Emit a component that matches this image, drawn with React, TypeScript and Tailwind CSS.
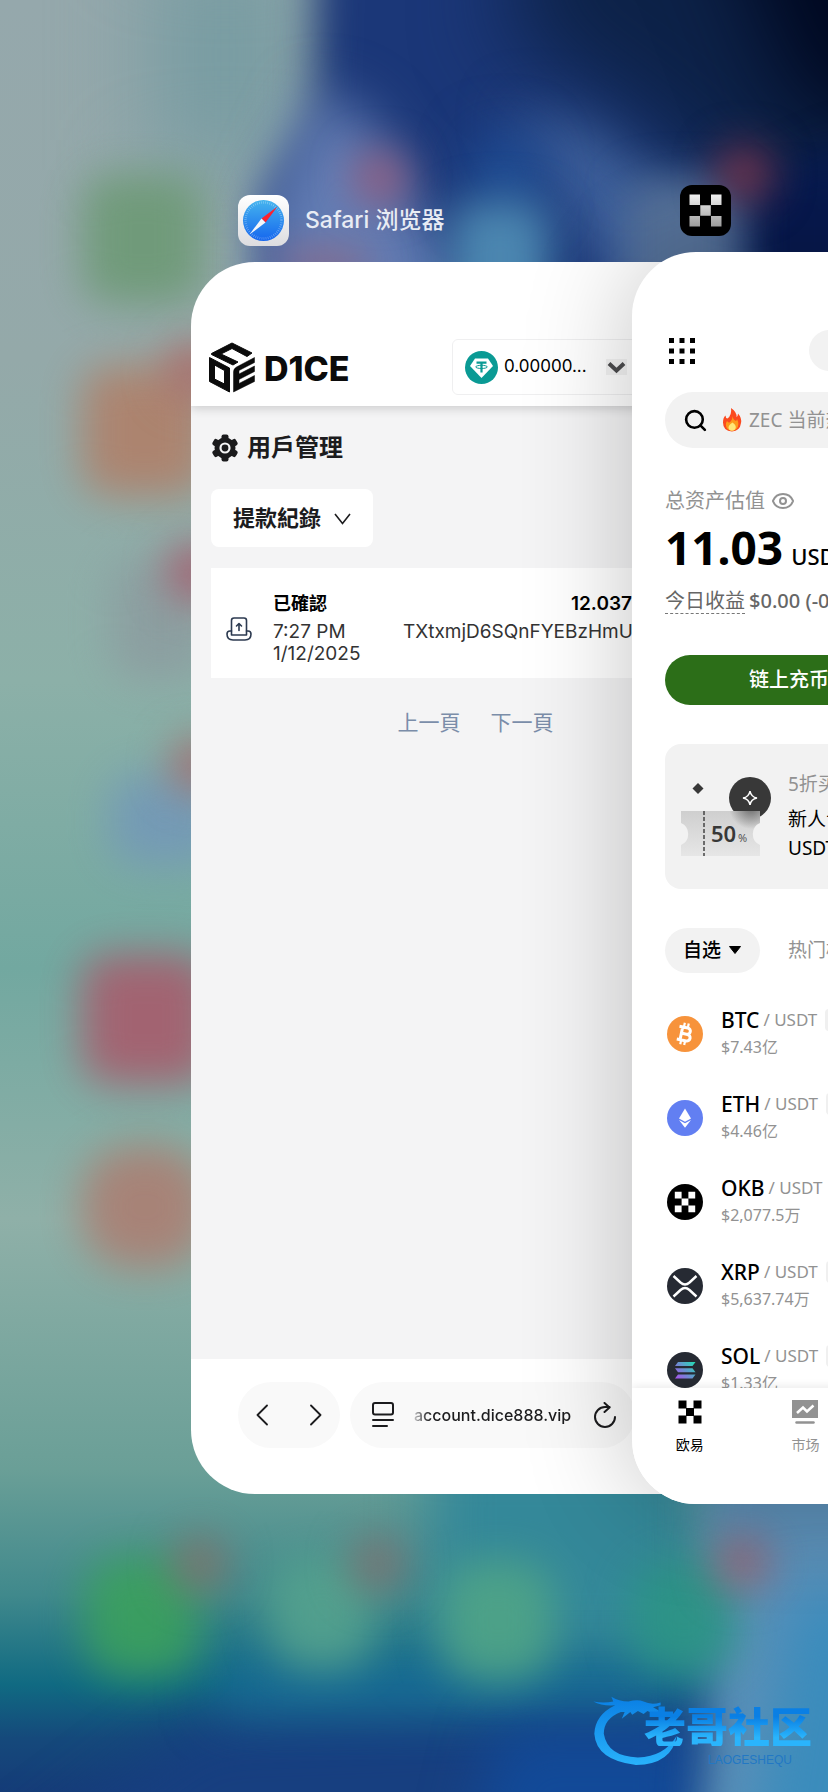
import type { ReactNode } from "react";
import { Eye, Search } from "lucide-react";

interface Coin {
  symbol: string;
  volume: string;
  icon: ReactNode;
}

const coins: Coin[] = [
  { symbol: "BTC", volume: "$7.43亿", icon: <BtcIcon /> },
  { symbol: "ETH", volume: "$4.46亿", icon: <EthIcon /> },
  { symbol: "OKB", volume: "$2,077.5万", icon: <OkbIcon /> },
  { symbol: "XRP", volume: "$5,637.74万", icon: <XrpIcon /> },
  { symbol: "SOL", volume: "$1.33亿", icon: <SolIcon /> },
];

function Wallpaper() {
  return (
    <svg
      className="absolute inset-0 h-full w-full"
      viewBox="0 0 828 1792"
      preserveAspectRatio="none"
      aria-hidden="true"
    >
      <defs>
        <linearGradient id="wall-base" x1="0" y1="0" x2="0" y2="1">
          <stop offset="0" stopColor="#95a8ac" />
          <stop offset="0.2" stopColor="#94a9a9" />
          <stop offset="0.38" stopColor="#8cb0a8" />
          <stop offset="0.54" stopColor="#72a8a0" />
          <stop offset="0.68" stopColor="#8fb0a8" />
          <stop offset="0.82" stopColor="#6a9f97" />
          <stop offset="0.89" stopColor="#40898c" />
          <stop offset="0.94" stopColor="#106a82" />
          <stop offset="0.97" stopColor="#15497b" />
          <stop offset="1" stopColor="#153c78" />
        </linearGradient>
        <filter id="blur-s" x="-100%" y="-100%" width="300%" height="300%" colorInterpolationFilters="sRGB">
          <feGaussianBlur stdDeviation="21" />
        </filter>
        <filter id="blur-m" x="-100%" y="-100%" width="300%" height="300%" colorInterpolationFilters="sRGB">
          <feGaussianBlur stdDeviation="28" />
        </filter>
        <filter id="blur-l" x="-100%" y="-100%" width="300%" height="300%" colorInterpolationFilters="sRGB">
          <feGaussianBlur stdDeviation="45" />
        </filter>
      </defs>
      <rect width="828" height="1792" fill="url(#wall-base)" />

      {/* top */}
      <rect x="150" y="-60" width="150" height="230" fill="#789ca2" filter="url(#blur-l)" />
      <path d="M318 -100H1000V420H262V200L312 120Z" fill="#1b3778" filter="url(#blur-s)" />
      <path d="M318 90L370 120L480 320H262V210Z" fill="#637db4" filter="url(#blur-m)" />
      <path d="M510 110L600 120L700 210V320L620 290Z" fill="#40639f" filter="url(#blur-m)" />
      <path d="M560 -140H1000V250L760 230L640 120L500 20Z" fill="#0d2248" filter="url(#blur-l)" />
      <path d="M700 -140H1000V160L800 110Z" fill="#000820" filter="url(#blur-l)" />
      <path d="M745 190L860 140V340H745Z" fill="#07194f" filter="url(#blur-s)" />
      <ellipse cx="505" cy="175" rx="30" ry="40" fill="#1f549e" filter="url(#blur-m)" />
      <rect x="450" y="200" width="100" height="120" rx="30" fill="#4b86b0" filter="url(#blur-s)" />
      <rect x="628" y="180" width="112" height="130" rx="26" fill="#567299" filter="url(#blur-s)" />
      <circle cx="380" cy="178" r="27" fill="#965f80" filter="url(#blur-s)" />
      <circle cx="744" cy="174" r="28" fill="#78344c" filter="url(#blur-s)" />
      <ellipse cx="325" cy="266" rx="50" ry="16" fill="#8c6885" filter="url(#blur-s)" />

      {/* left column of home screen icons */}
      <g opacity="0.88">
        <rect x="82" y="174" width="122" height="130" rx="28" fill="#6c9974" filter="url(#blur-s)" />
        <rect x="82" y="366" width="126" height="130" rx="28" fill="#b07f68" filter="url(#blur-s)" />
        <circle cx="194" cy="370" r="28" fill="#ad6260" filter="url(#blur-s)" />
        <rect x="110" y="560" width="100" height="120" rx="28" fill="#8c9da0" filter="url(#blur-s)" />
        <circle cx="196" cy="572" r="29" fill="#a85468" filter="url(#blur-s)" />
        <rect x="110" y="775" width="110" height="90" rx="28" fill="#7398b8" filter="url(#blur-s)" />
        <circle cx="198" cy="765" r="27" fill="#a96468" filter="url(#blur-s)" />
        <rect x="82" y="954" width="130" height="130" rx="28" fill="#a85a6b" filter="url(#blur-s)" />
        <rect x="82" y="1146" width="126" height="122" rx="50" fill="#ab7d71" filter="url(#blur-s)" />
      </g>

      {/* dock */}
      <path d="M200 1720L1000 1690V1900H-40Z" fill="#173f80" filter="url(#blur-m)" />
      <rect x="430" y="1440" width="270" height="220" fill="#348899" filter="url(#blur-m)" />
      <rect x="220" y="1660" width="460" height="50" fill="#1b6d9a" filter="url(#blur-m)" />
      <path d="M500 1730H700V1900H460Z" fill="#124a98" filter="url(#blur-m)" />
      <path d="M700 1400H1000V1900H692L708 1740Z" fill="#5c90b8" filter="url(#blur-s)" />
      <path d="M790 1590H1000V1900H740Z" fill="#3b8cbc" filter="url(#blur-m)" />
      <g opacity="0.88">
        <rect x="84" y="1556" width="116" height="122" rx="40" fill="#3ba15c" filter="url(#blur-s)" />
        <rect x="268" y="1556" width="108" height="114" rx="40" fill="#55a38e" filter="url(#blur-s)" />
        <rect x="442" y="1560" width="112" height="122" rx="40" fill="#50a586" filter="url(#blur-s)" />
        <rect x="630" y="1560" width="108" height="114" rx="40" fill="#2c9585" filter="url(#blur-s)" />
        <circle cx="200" cy="1564" r="28" fill="#84706a" filter="url(#blur-s)" />
        <circle cx="378" cy="1564" r="28" fill="#827070" filter="url(#blur-s)" />
        <circle cx="742" cy="1562" r="28" fill="#9c6472" filter="url(#blur-s)" />
      </g>
    </svg>
  );
}

function SafariAppIcon() {
  return (
    <svg className="size-[51px]" viewBox="0 0 51 51" aria-hidden="true">
      <defs>
        <linearGradient id="safari-plate" x1="0" y1="0" x2="0" y2="1">
          <stop offset="0" stopColor="#ffffff" />
          <stop offset="1" stopColor="#dcdcdf" />
        </linearGradient>
        <linearGradient id="safari-face" x1="0" y1="0" x2="0" y2="1">
          <stop offset="0" stopColor="#45b4ee" />
          <stop offset="1" stopColor="#1566ee" />
        </linearGradient>
      </defs>
      <rect width="51" height="51" rx="12" fill="url(#safari-plate)" />
      <circle cx="25.5" cy="25.5" r="20.5" fill="url(#safari-face)" />
      <circle
        cx="25.5"
        cy="25.5"
        r="18"
        fill="none"
        stroke="#fff"
        strokeOpacity="0.4"
        strokeWidth="2.4"
        strokeDasharray="0.6 1.5"
      />
      <path d="M39.5 11.5L23.5 23.5L27.5 27.5Z" fill="#fb2230" />
      <path d="M11.5 39.5L23.5 23.5L27.5 27.5Z" fill="#f4f6fa" />
    </svg>
  );
}

function OkxAppIcon() {
  return (
    <svg className="size-[51px]" viewBox="0 0 51 51" aria-hidden="true">
      <defs>
        <linearGradient id="okx-metal" gradientUnits="userSpaceOnUse" x1="0" y1="9" x2="0" y2="42">
          <stop offset="0" stopColor="#f2f2f2" />
          <stop offset="1" stopColor="#9c9c9c" />
        </linearGradient>
      </defs>
      <rect width="51" height="51" rx="12" fill="#000" />
      <path
        d="M9.5 9.5h10.5v10.5h-10.5zM31 9.5h10.5v10.5h-10.5zM20.3 20.3h10.5v10.5h-10.5zM9.5 31h10.5v10.5h-10.5zM31 31h10.5v10.5h-10.5z"
        fill="url(#okx-metal)"
      />
    </svg>
  );
}

function DiceLogo() {
  return (
    <svg className="h-[51px] w-12" viewBox="0 0 48 51" fill="#0b0b0b" aria-hidden="true">
      {/* top face */}
      <path
        d="M24 1L44 11L39 14.500L24 6.500L13 12L30 20L25 23L3.500 12.500V11.500Z"
        stroke="#0b0b0b"
        strokeLinejoin="round"
      />
      {/* left face */}
      <path
        d="M1.500 15.500L21.500 26V50L1.500 39.500ZM6.500 23V37L16.500 42V28.500Z"
        fillRule="evenodd"
        stroke="#0b0b0b"
        strokeLinejoin="round"
      />
      {/* right face */}
      <path
        d="M46.500 15.500V20.500L31 28.500V32L46.500 24V29.500L31 37.500V41.500L46.500 33.500V39.500L25.500 50V30Q25.500 26.500 28.500 25Z"
        stroke="#0b0b0b"
        strokeWidth="0.500"
        strokeLinejoin="round"
      />
    </svg>
  );
}

function TetherIcon() {
  return (
    <svg className="size-[33px]" viewBox="0 0 33 33" aria-hidden="true">
      <circle cx="16.5" cy="16.5" r="16.5" fill="#0a9a94" />
      <path d="M10 7.5H23L28 15L16.5 27L5 15Z" fill="#fff" />
      <path d="M11.5 10.5h10v2.200h-3.900v8.800h-2.200v-8.800h-3.900z" fill="#0a9a94" />
      <ellipse cx="16.5" cy="15.9" rx="5.8" ry="1.6" fill="none" stroke="#0a9a94" />
    </svg>
  );
}

function GearIcon() {
  return (
    <svg className="size-7" viewBox="0 0 28 28" aria-hidden="true">
      <g fill="#1a1a1c">
        <circle cx="14" cy="14" r="10.5" />
        <rect x="10.5" y="0.5" width="7" height="27" rx="2" />
        <rect x="10.5" y="0.5" width="7" height="27" rx="2" transform="rotate(60 14 14)" />
        <rect x="10.5" y="0.5" width="7" height="27" rx="2" transform="rotate(120 14 14)" />
      </g>
      <circle cx="14" cy="14" r="4.5" fill="none" stroke="#f4f4f5" strokeWidth="2.2" />
    </svg>
  );
}

function WithdrawIcon() {
  return (
    <svg
      className="h-6 w-[26px]"
      viewBox="0 0 26 24"
      fill="none"
      stroke="#2c3a50"
      strokeWidth="1.6"
      strokeLinecap="round"
      strokeLinejoin="round"
      aria-hidden="true"
    >
      <path d="M5.500 18V3.500Q5.500 1 8 1H18Q20.500 1 20.500 3.500V18Z" />
      <path d="M5.500 14H4Q1 14 1 17Q1 23 7 23H19Q25 23 25 17Q25 14 22 14H20.500" />
      <path d="M13 13.500V7M10.500 9L13 6.500L15.500 9" />
    </svg>
  );
}

function ReaderIcon() {
  return (
    <svg
      className="h-[26px] w-[22px]"
      viewBox="0 0 22 26"
      fill="none"
      stroke="#1c1c1e"
      strokeWidth="2"
      strokeLinecap="round"
      aria-hidden="true"
    >
      <rect x="1" y="1" width="20" height="11.500" rx="2" />
      <path d="M1 18H21M1 24H15" />
    </svg>
  );
}

function ReloadIcon() {
  return (
    <svg
      className="h-[26px] w-[22px]"
      viewBox="0 0 22 26"
      fill="none"
      stroke="#1c1c1e"
      strokeWidth="2"
      strokeLinecap="round"
      strokeLinejoin="round"
      aria-hidden="true"
    >
      <path d="M21 15A10 10 0 1 1 11 5H15.500" />
      <path d="M10.500 1L15.500 5.500L10.500 10" />
    </svg>
  );
}

function BtcIcon() {
  return (
    <svg className="size-9" viewBox="0 0 36 36" aria-hidden="true">
      <circle cx="18" cy="18" r="18" fill="#f7933b" />
      <g transform="rotate(12 18 18)" fill="none" stroke="#fff" strokeLinejoin="round">
        <path
          d="M11 11.500H19.500a3.100 3.100 0 0 1 0 6.400H14M14 17.900H20.500a3.300 3.300 0 0 1 0 6.700H11M14.300 11.500V24.500"
          strokeWidth="3"
        />
        <path d="M15.500 7V11M19.500 7V11M15.500 25V29M19.500 25V29" strokeWidth="2.200" />
      </g>
    </svg>
  );
}

function EthIcon() {
  return (
    <svg className="size-9" viewBox="0 0 36 36" aria-hidden="true">
      <circle cx="18" cy="18" r="18" fill="#627ff2" />
      <path d="M18 8.500L24 18.500L18 21.700L12 18.500Z" fill="#fff" />
      <path d="M12 20L18 23.200L24 20L18 27.800Z" fill="#fff" />
    </svg>
  );
}

function OkbIcon() {
  return (
    <svg className="size-9" viewBox="0 0 36 36" aria-hidden="true">
      <circle cx="18" cy="18" r="18" fill="#000" />
      <path
        d="M7.800 7.800h6.800v6.800h-6.800zM21.400 7.800h6.800v6.800h-6.800zM14.600 14.600h6.800v6.800h-6.800zM7.800 21.400h6.800v6.800h-6.800zM21.400 21.400h6.800v6.800h-6.800z"
        fill="#fff"
      />
    </svg>
  );
}

function XrpIcon() {
  return (
    <svg className="size-9" viewBox="0 0 36 36" aria-hidden="true">
      <circle cx="18" cy="18" r="18" fill="#262a33" />
      <path
        d="M6.500 8L13.500 14.500Q18 18.300 22.500 14.500L29.500 8M6.500 28.500L13.500 22Q18 18.200 22.500 22L29.500 28.500"
        fill="none"
        stroke="#fff"
        strokeWidth="2.400"
      />
    </svg>
  );
}

function SolIcon() {
  return (
    <svg className="size-9" viewBox="0 0 36 36" aria-hidden="true">
      <defs>
        <linearGradient id="sol" gradientUnits="userSpaceOnUse" x1="8" y1="28" x2="28" y2="10">
          <stop offset="0" stopColor="#b04af0" />
          <stop offset="0.500" stopColor="#6a8fd0" />
          <stop offset="1" stopColor="#22e0b4" />
        </linearGradient>
      </defs>
      <circle cx="18" cy="18" r="18" fill="#262a33" />
      <path
        d="M11 10h17.500l-3 4h-17.500zM8 16.300h17.500l3 4h-17.500zM11 22.600h17.500l-3 4h-17.500z"
        fill="url(#sol)"
      />
    </svg>
  );
}

function Ticket() {
  return (
    <svg className="h-[79px] w-[91px]" viewBox="0 0 91 79" role="img" aria-label="50%">
      <defs>
        <linearGradient id="ticket" x1="0" y1="0" x2="0" y2="1">
          <stop offset="0" stopColor="#cfcfcf" />
          <stop offset="1" stopColor="#e6e6e6" />
        </linearGradient>
        <radialGradient id="ticket-shade" gradientUnits="userSpaceOnUse" cx="70" cy="30" r="22">
          <stop offset="0" stopColor="#6a6a6a" />
          <stop offset="1" stopColor="#6a6a6a" stopOpacity="0" />
        </radialGradient>
      </defs>
      <circle cx="69" cy="21" r="21" fill="#383838" />
      <path
        d="M69 14Q70 20 76 21Q70 22 69 28Q68 22 62 21Q68 20 69 14Z"
        fill="none"
        stroke="#fff"
        strokeWidth="1.500"
      />
      <path d="M17 6L22.500 11.500L17 17L11.500 11.500Z" fill="#383838" />
      <path
        d="M0 34H79V46A12 12 0 0 0 79 68V79H0V68A12 12 0 0 0 0 46Z"
        fill="url(#ticket)"
      />
      <path
        d="M0 34H79V46A12 12 0 0 0 79 68V79H0V68A12 12 0 0 0 0 46Z"
        fill="url(#ticket-shade)"
      />
      <path d="M23 34V79" stroke="#444" strokeWidth="1.500" strokeDasharray="4 2" />
      <text x="30" y="65" fontSize="22" fontWeight="600" fill="#383838" fontFamily="Noto Sans">
        50
      </text>
      <text x="57" y="65" fontSize="11" fill="#555" fontFamily="Noto Sans">
        %
      </text>
    </svg>
  );
}

function SafariCard() {
  return (
    <section className="w-[569px] shrink-0 pt-[195px] font-['Inter','Noto_Sans_CJK_TC',sans-serif]">
      <header className="flex items-center gap-4 pb-4 pl-[47px]">
        <SafariAppIcon />
        <h1 className="font-['Inter','Noto_Sans_CJK_SC',sans-serif] text-[23px] font-medium text-[#e8ecf4]">
          Safari 浏览器
        </h1>
      </header>

      <div className="overflow-hidden rounded-[64px] bg-white">
        <div className="relative flex items-center justify-between pt-[77px] pb-[11px] pl-[17px] shadow-[0_2px_10px_rgba(0,0,0,0.18)]">
          <div className="flex items-center gap-2">
            <DiceLogo />
            <span className="pt-1 text-[34px] leading-none font-extrabold text-[#0b0b0b]">D1CE</span>
          </div>
          <div className="relative flex h-14 w-[308px] items-center gap-1.5 rounded-md border border-[#efeff0] pl-3">
            <TetherIcon />
            <select
              aria-label="Balance"
              className="w-[140px] appearance-none bg-transparent text-[17px] text-black"
            >
              <option>0.00000...</option>
            </select>
            <svg
              className="pointer-events-none absolute left-[153px] h-4 w-[21px] bg-[#f3f3f3]"
              viewBox="0 0 21 16"
              fill="none"
              aria-hidden="true"
            >
              <path d="M3 4.500L10.500 11.500L18 4.500" stroke="#4c4c4e" strokeWidth="4" />
            </svg>
          </div>
        </div>

        <main className="h-[953px] bg-[#f4f4f5] pt-[27px] pl-5">
          <h2 className="flex items-center gap-2 text-2xl leading-[30px] font-bold text-[#1c1c1e]">
            <GearIcon />
            用戶管理
          </h2>

          <div className="relative mt-[26px] h-[58px] w-[162px]">
            <select
              aria-label="紀錄類型"
              className="h-full w-full appearance-none rounded-lg bg-white pl-[22px] text-[22px] font-bold text-[#1c1c1e]"
            >
              <option>提款紀錄</option>
            </select>
            <svg
              className="pointer-events-none absolute top-6 right-[22px] h-3 w-[17px]"
              viewBox="0 0 17 12"
              fill="none"
              aria-hidden="true"
            >
              <path d="M1 1L8.500 10.500L16 1" stroke="#1c1c1e" strokeWidth="1.600" />
            </svg>
          </div>

          <article className="mt-[21px] flex h-[110px] items-center bg-white pt-3 pl-[15px] text-[19px] text-[#333]">
            <WithdrawIcon />
            <div className="ml-[21px] w-[130px] leading-[22px]">
              <p className="mb-1.5 text-lg leading-[22px] font-bold text-black">已確認</p>
              <p>7:27 PM</p>
              <p>1/12/2025</p>
            </div>
            <div className="h-[72px] leading-[22px]">
              <p className="mb-1.5 pl-[168px] font-semibold text-black">12.037</p>
              <p>TXtxmjD6SQnFYEBzHmU</p>
            </div>
          </article>

          <nav className="-ml-5 flex justify-center gap-[30px] pt-[29px] text-[21px] text-[#7b8da9]">
            <button type="button">上一頁</button>
            <button type="button">下一頁</button>
          </nav>
        </main>

        <footer className="flex h-[135px] items-start gap-2.5 pt-[23px] pl-[47px] text-[#1c1c1e]">
          <div className="flex h-[66px] w-[102px] items-center justify-between rounded-full bg-[#f9f9f9] px-[18px]">
            <button type="button" aria-label="返回">
              <svg className="h-[22px] w-3" viewBox="0 0 12 22" fill="none" aria-hidden="true">
                <path
                  d="M11 1.500L1.500 11L11 20.500"
                  stroke="currentColor"
                  strokeWidth="1.800"
                  strokeLinecap="round"
                  strokeLinejoin="round"
                />
              </svg>
            </button>
            <button type="button" aria-label="前進">
              <svg className="h-[22px] w-3" viewBox="0 0 12 22" fill="none" aria-hidden="true">
                <path
                  d="M1 1.500L10.500 11L1 20.500"
                  stroke="currentColor"
                  strokeWidth="1.800"
                  strokeLinecap="round"
                  strokeLinejoin="round"
                />
              </svg>
            </button>
          </div>
          <div className="flex h-[66px] w-[285px] items-center rounded-full bg-[#f9f9f9] pl-[22px]">
            <ReaderIcon />
            <input
              aria-label="網址"
              readOnly
              value="account.dice888.vip"
              className="ml-5 w-[164px] bg-transparent bg-linear-to-r from-[#c4c4c6] from-0% to-[#1c1c1e] to-10% bg-clip-text text-base font-medium text-transparent"
            />
            <button type="button" aria-label="重新載入" className="ml-4">
              <ReloadIcon />
            </button>
          </div>
        </footer>
      </div>
    </section>
  );
}

function CoinRow({ symbol, volume, icon }: Coin) {
  return (
    <li className="flex h-[84px] items-center gap-[18px]">
      {icon}
      <div>
        <p className="flex items-center gap-1 leading-[26px]">
          <span className="text-[21px] font-medium text-black">{symbol}</span>
          <span className="text-[17px] text-[#929292]">/ USDT</span>
          <span className="ml-1 h-[22px] w-9 rounded bg-[#f0f0f0]" />
        </p>
        <p className="text-base leading-7 text-[#929292]">{volume}</p>
      </div>
    </li>
  );
}

function OkxCard() {
  return (
    <section className="relative -ml-[128px] w-[578px] shrink-0 pt-[185px] font-['Noto_Sans','Noto_Sans_CJK_SC',sans-serif]">
      <header className="pb-4 pl-12">
        <OkxAppIcon />
      </header>

      <div className="flex h-[1252px] flex-col overflow-hidden rounded-[64px] bg-white shadow-[0_0_110px_rgba(0,0,0,0.24)]">
        <div className="min-h-0 flex-1 overflow-hidden px-[33px] pt-[78px]">
          <div className="flex items-center justify-between">
            <button type="button" aria-label="菜单" className="ml-1">
              <svg className="size-[26px]" viewBox="0 0 26 26" aria-hidden="true">
                <path
                  d="M0 0h5v5H0zM10.500 0h5v5h-5zM21 0h5v5h-5zM0 10.500h5v5H0zM10.500 10.500h5v5h-5zM21 10.500h5v5h-5zM0 21h5v5H0zM10.500 21h5v5h-5zM21 21h5v5h-5z"
                  fill="#000"
                />
              </svg>
            </button>
            <div className="mr-[167px] h-[41px] w-[201px] rounded-full bg-[#f2f2f2]" />
          </div>

          <label className="mt-[21px] flex h-14 items-center rounded-full bg-[#f2f2f2] pl-[18px]">
            <Search className="size-[25px] text-black" strokeWidth={2.500} />
            <svg className="ml-[14px] h-6 w-5" viewBox="0 0 20 24" aria-hidden="true">
              <path
                d="M9 0Q15 4 14.500 9Q16 8 16 5.500Q20 10 19 15Q18 23 10 23.500Q1 23 1 14.500Q1 9.500 3.500 7.500Q3.500 10 5.500 10.500Q10 7 9 0Z"
                fill="#fb4a1f"
              />
              <path
                d="M10.500 8Q11 12 14 13Q15 12 15 11Q18 17 14.500 21Q10 24.500 5.500 21Q2.500 17 5 13Q6 14.500 7.500 14.500Q10.500 12 10.500 8Z"
                fill="#fd9a1c"
              />
              <path d="M10.500 14.500Q15.500 18 13 21.500Q10 24 7 21.500Q5 18 10.500 14.500Z" fill="#ffe879" />
            </svg>
            <input
              aria-label="搜索"
              placeholder="ZEC 当前热度飙升"
              className="ml-[7px] min-w-0 flex-1 bg-transparent text-[19px] placeholder:text-[#929292]"
            />
          </label>

          <div className="mt-[39px] flex items-center gap-1.5 text-[#929292]">
            <h2 className="text-[20px] leading-[28px]">总资产估值</h2>
            <Eye className="size-6" strokeWidth={2} />
          </div>
          <p className="flex h-[58px] items-baseline gap-2 leading-[64px] text-black">
            <span className="text-[46px] font-bold">11.03</span>
            <span className="text-[22px] font-medium">USDT</span>
          </p>
          <p className="mt-4 flex items-baseline gap-1 text-[20px] leading-6 text-[#666]">
            <span className="border-b border-dashed border-[#777]">今日收益</span>
            <span className="font-medium whitespace-nowrap">$0.00 (-0.02%)</span>
          </p>

          <div className="mt-[41px] grid grid-cols-2 gap-4">
            <button
              type="button"
              className="h-[50px] rounded-full bg-[#2c6e18] text-[20px] font-medium text-white"
            >
              链上充币
            </button>
          </div>

          <article className="mt-[39px] flex h-[145px] items-center gap-4 rounded-2xl bg-[#f2f2f2] pl-4">
            <Ticket />
            <div className="text-[19px] leading-[29px] whitespace-nowrap">
              <p className="mb-1.5 text-[#929292]">5折买币</p>
              <p className="text-black">新人专享</p>
              <p className="text-black">USDT</p>
            </div>
          </article>

          <div className="mt-[39px] flex items-center gap-7 text-[19px] text-[#929292]">
            <div className="relative h-[45px] w-[95px]">
              <select
                aria-label="列表"
                className="h-full w-full appearance-none rounded-full bg-[#f2f2f2] pl-[18px] font-medium text-black"
              >
                <option>自选</option>
              </select>
              <svg
                className="pointer-events-none absolute top-[18px] right-[19px] h-2 w-3"
                viewBox="0 0 12 8"
                aria-hidden="true"
              >
                <path d="M0.500 0.500H11.500L6 7.500Z" fill="#000" stroke="#000" strokeLinejoin="round" />
              </svg>
            </div>
            <button type="button">热门榜</button>
          </div>

          <ul className="mt-[19px] pl-0.5">
            {coins.map((coin) => (
              <CoinRow key={coin.symbol} {...coin} />
            ))}
          </ul>
        </div>

        <nav className="relative grid h-[116px] grid-cols-5 items-start bg-white pt-3 text-sm leading-5 shadow-[0_-2px_8px_rgba(0,0,0,0.08)]">
          <button type="button" className="flex flex-col items-center gap-[11px] text-black">
            <svg className="size-6" viewBox="0 0 24 24" aria-hidden="true">
              <path
                d="M0.500 0.500h8v8h-8zM15.500 0.500h8v8h-8zM8 8h8v8h-8zM0.500 15.500h8v8h-8zM15.500 15.500h8v8h-8z"
                fill="#000"
              />
            </svg>
            欧易
          </button>
          <button type="button" className="flex flex-col items-center gap-[11px] text-[#929292]">
            <svg className="h-6 w-[26px]" viewBox="0 0 26 24" aria-hidden="true">
              <path d="M0 0H26V18H0Z" fill="#929292" />
              <path
                d="M5 13L11 7.500L15 11.500L21.500 5.500"
                fill="none"
                stroke="#fff"
                strokeWidth="2.500"
              />
              <path d="M4.500 22.500H21.500" stroke="#929292" strokeWidth="2.500" strokeLinecap="round" />
            </svg>
            市场
          </button>
        </nav>
      </div>
    </section>
  );
}

function Watermark() {
  return (
    <aside className="absolute right-4 bottom-[26px] flex w-[222px] flex-col items-end font-['Noto_Sans_CJK_SC',sans-serif]">
      <svg className="absolute bottom-0 left-0 h-[72px] w-[92px]" viewBox="0 0 92 76" aria-hidden="true">
        <defs>
          <linearGradient id="dragon" x1="0" y1="0" x2="0" y2="1">
            <stop offset="0" stopColor="#0a7fe4" />
            <stop offset="1" stopColor="#29b2fb" />
          </linearGradient>
        </defs>
        <path
          d="M30 19Q12 26 12 42Q16 66 48 67Q76 66 89 44Q84 74 46 75Q4 70 2 42Q3 22 24 12Q10 13 1 8Q12 10 22 8L20 3Q28 8 38 8Q48 5 54 8Q62 12 72 9V12L64 14L71 18L66 21L58 18L54 21L48 18L42 22L40 19L31 26L34 19Z"
          fill="url(#dragon)"
        />
      </svg>
      <p className="relative bg-linear-to-b from-[#0a7fe4] from-30% to-[#2ab4fc] to-80% bg-clip-text text-[42px] leading-[42px] font-black text-transparent">
        老哥社区
      </p>
      <p className="relative mt-2 mr-5 font-['Liberation_Sans',sans-serif] text-xs leading-3 text-[#2278c4]">
        LAOGESHEQU
      </p>
    </aside>
  );
}

export default function App() {
  return (
    <div className="relative min-h-screen overflow-hidden">
      <Wallpaper />
      <div className="relative flex items-start pl-[191px]">
        <SafariCard />
        <OkxCard />
      </div>
      <Watermark />
    </div>
  );
}
